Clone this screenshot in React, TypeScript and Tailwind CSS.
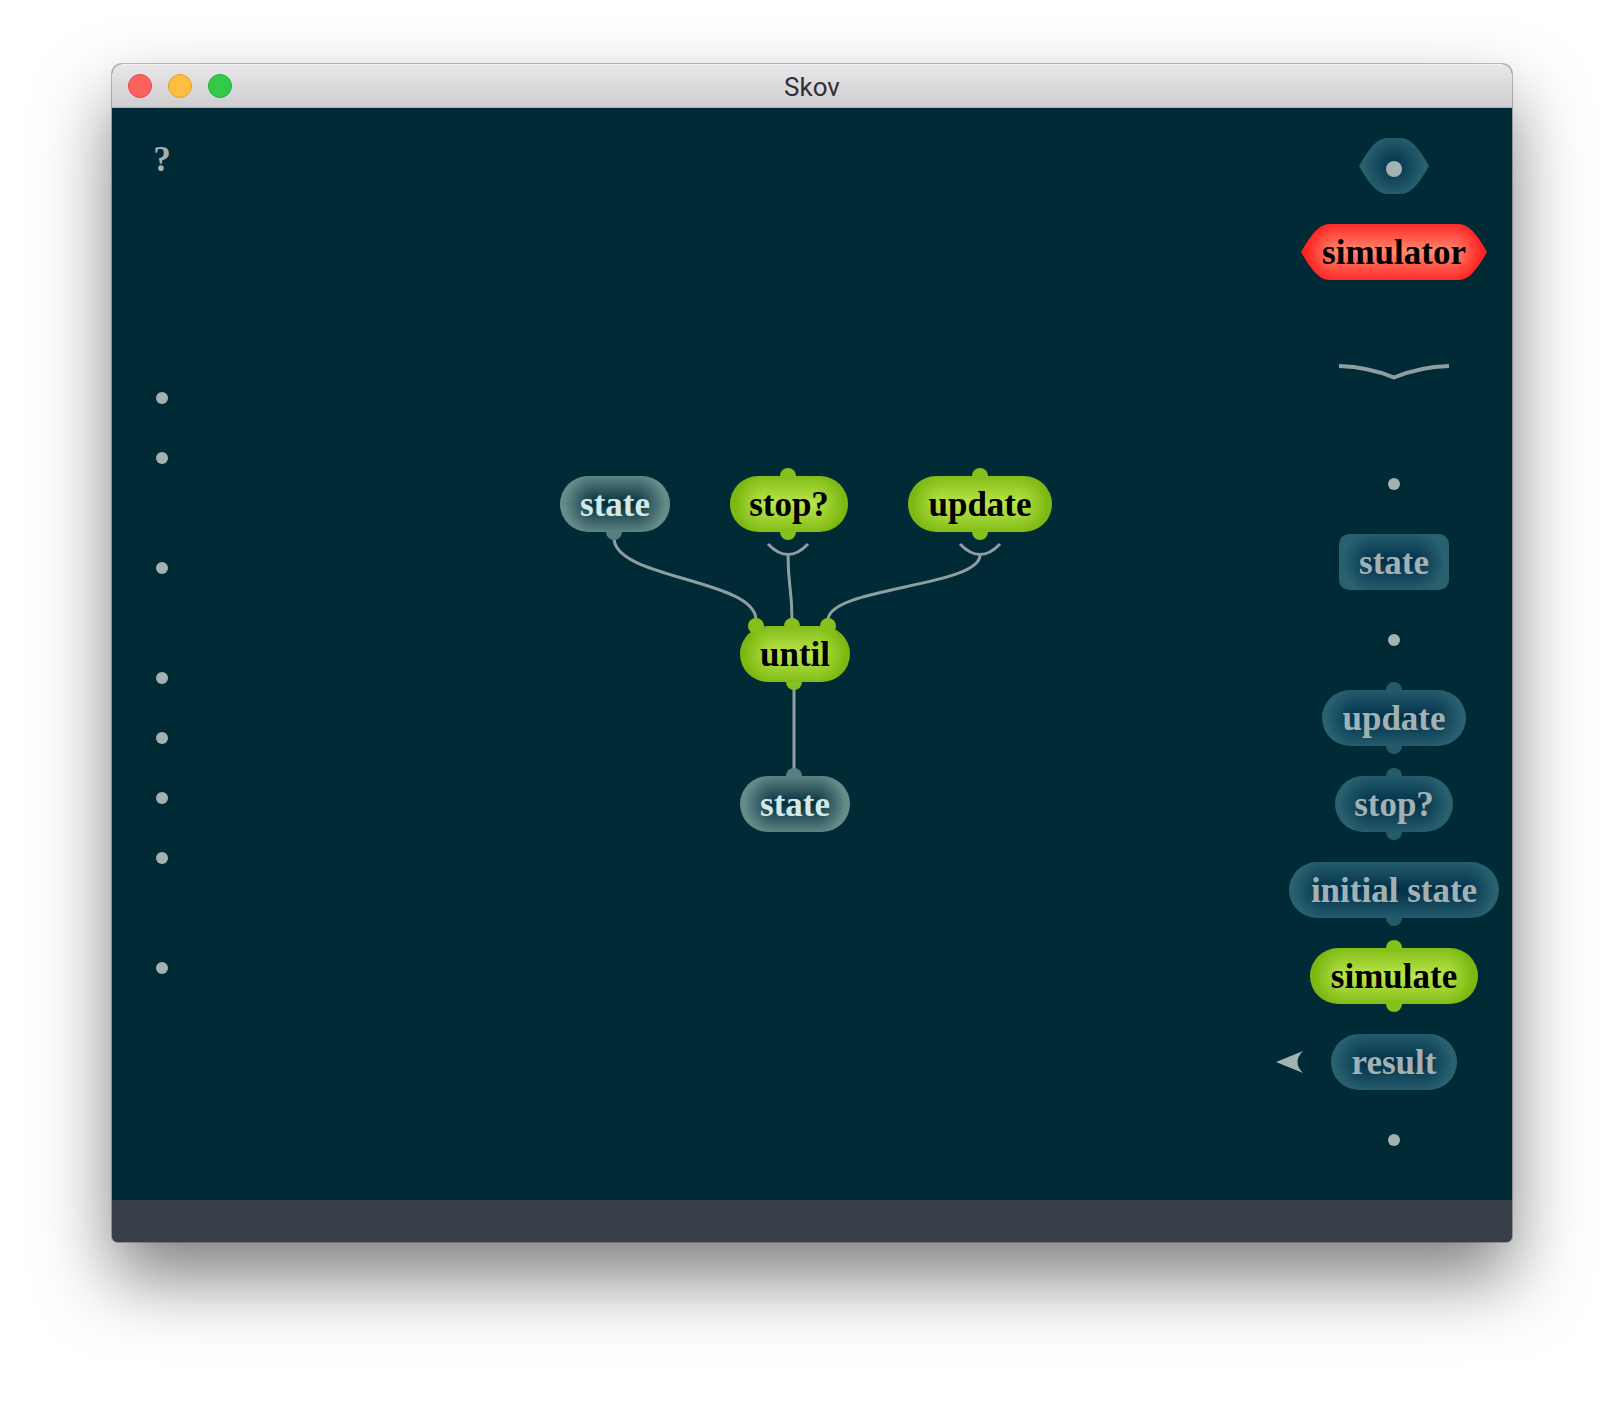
import React from "react";

type Tone = "blue" | "grey" | "green" | "red";

const TONES: Record<Tone, string> = {
  blue: "[--core:#00304a] [--rim:#29616f] text-[#a3b1b2]",
  grey: "[--core:#042f3d] [--rim:#668c8a] text-[#d3e8e8]",
  green: "[--core:#bae64c] [--rim:#7cb811] text-black",
  red: "[--core:#ff8a70] [--rim:#ff2020] text-black",
};

const GLOW =
  "[background:radial-gradient(circle_31px_at_100%_50%,var(--core),var(--rim))_0_0/35px_100%_no-repeat,radial-gradient(circle_31px_at_0_50%,var(--core),var(--rim))_100%_0/35px_100%_no-repeat,linear-gradient(var(--rim)_-3px,var(--core)_50%,var(--rim)_calc(100%+3px))_50%_0/calc(100%-68px)_100%_no-repeat]";

const PORTS: Record<Tone, string> = {
  blue: "bg-[#235b6a]",
  grey: "bg-[#587f80]",
  green: "bg-[#86c01c]",
  red: "bg-[#ff3030]",
};

type NodeProps = {
  label: React.ReactNode;
  tone: Tone;
  width: string;
  shape?: string;
  ports?: string[];
  raisedPorts?: string[];
  place?: string;
};

function Node({ label, tone, width, shape = "rounded-full", ports = [], raisedPorts = [], place = "relative" }: NodeProps) {
  return (
    <button type="button" className={`block h-14 ${width} ${place} ${TONES[tone]}`}>
      {ports.map((p) => (
        <span key={p} className={`absolute size-4 rounded-full ${PORTS[tone]} ${p}`} />
      ))}
      <span className={`relative flex size-full items-center justify-center pt-0.5 text-[35px] leading-10 font-bold whitespace-nowrap ${GLOW} ${shape}`}>
        {label}
      </span>
      {raisedPorts.map((p) => (
        <span key={p} className={`absolute size-4 rounded-full ${PORTS[tone]} ${p}`} />
      ))}
    </button>
  );
}

function Dot({ space = "" }: { space?: string }) {
  return <button type="button" aria-label="Insert" className={`block size-3 rounded-full bg-[#a3b1b2] ${space}`} />;
}

const TOP = "-top-2 left-1/2 -translate-x-1/2";
const BOTTOM = "-bottom-2 left-1/2 -translate-x-1/2";

function Graph() {
  return (
    <div className="relative h-[356px] w-[492px]">
      <svg className="absolute inset-0 size-full overflow-visible" viewBox="0 0 492 356" fill="none" stroke="#8f9fa1" strokeWidth="3">
        <path d="M54 62C54 103 196 103 196 144" />
        <path d="M228 79C228 111 232 111 232 144" />
        <path d="M420 79C420 111 268 111 268 144" />
        <path d="M208 68Q228 89 248 68" />
        <path d="M400 68Q420 89 440 68" />
        <path d="M234 212V294" />
      </svg>
      <Node label="state" tone="grey" width="w-[110px]" place="absolute top-0 left-0" ports={["-bottom-2 left-[46px]"]} />
      <Node label="stop?" tone="green" width="w-[118px]" place="absolute top-0 left-[170px]" ports={["-top-2 left-[50px]", "-bottom-2 left-[50px]"]} />
      <Node label="update" tone="green" width="w-[144px]" place="absolute top-0 left-[348px]" ports={[TOP, BOTTOM]} />
      <Node
        label="until"
        tone="green"
        width="w-[110px]"
        place="absolute top-[150px] left-[180px]"
        ports={["-top-2 left-11", "-bottom-2 left-[46px]"]}
        raisedPorts={["-top-2 left-2", "-top-2 left-20"]}
      />
      <Node label="state" tone="grey" width="w-[110px]" place="absolute top-[300px] left-[180px]" ports={["-top-2 left-[46px]"]} />
    </div>
  );
}

export default function App() {
  return (
    <div className="min-h-screen bg-white px-28 pt-16 pb-40 font-['Liberation_Serif',serif]">
      <div className="overflow-hidden rounded-t-[10px] rounded-b-[6px] bg-[#002b36] shadow-[0_0_0_1px_rgba(0,0,0,0.25),0_36px_72px_rgba(0,0,0,0.5)]">
        <header className="grid h-11 grid-cols-3 items-center border-t border-b border-t-[#f4f3f4] border-b-[#b5b3b5] bg-linear-to-b from-[#e8e6e9] to-[#d1ced2] px-4">
          <div className="flex gap-4">
            <button type="button" aria-label="Close" className="size-6 rounded-full border border-[#e2464a] bg-[#fd615c]" />
            <button type="button" aria-label="Minimize" className="size-6 rounded-full border border-[#dfa023] bg-[#fdbe41]" />
            <button type="button" aria-label="Zoom" className="size-6 rounded-full border border-[#1fad30] bg-[#34ca49]" />
          </div>
          <h1 className="pt-0.5 text-center font-['Roboto',sans-serif] text-[26px] leading-8 text-[#323034]">Skov</h1>
        </header>

        <div className="flex">
          <nav className="mr-[124px] flex w-[100px] flex-col items-center gap-12 pt-8">
            <button type="button" className="mb-40 block h-9 w-9 text-[35px] leading-10 font-bold text-[#a3b1b2]">?</button>
            <Dot space="mt-2" />
            <Dot />
            <Dot space="mt-[50px]" />
            <Dot space="mt-[50px]" />
            <Dot />
            <Dot />
            <Dot />
            <Dot space="mt-[50px]" />
          </nav>

          <main className="flex flex-1 items-center justify-center">
            <Graph />
          </main>

          <aside className="flex w-[236px] flex-col items-center gap-[30px] pt-[30px] pb-10">
            <Node
              label={<span className="mt-1 size-4 rounded-full bg-[#a3b1b2]" />}
              tone="blue"
              width="w-[70px]"
              shape="[clip-path:path('M0_28C8_14_17_0_28_0H42C53_0_62_14_70_28C62_42_53_56_42_56H28C17_56_8_42_0_28Z')]"
            />
            <Node
              label="simulator"
              tone="red"
              width="w-[186px]"
              shape="[clip-path:path('M0_28C8_14_17_0_28_0H158C169_0_178_14_186_28C178_42_169_56_158_56H28C17_56_8_42_0_28Z')]"
            />
            <svg className="my-[54px] h-4 w-[110px]" viewBox="0 0 110 16" fill="none" stroke="#8f9fa1" strokeWidth="4">
              <path d="M0 2Q30 3 55 13.500Q80 3 110 2" />
            </svg>
            <Dot space="my-[14px]" />
            <Node label="state" tone="blue" width="w-[110px]" shape="rounded-[10px]" />
            <Dot space="my-[14px]" />
            <Node label="update" tone="blue" width="w-[144px]" ports={[TOP, BOTTOM]} />
            <Node label="stop?" tone="blue" width="w-[118px]" ports={[TOP, BOTTOM]} />
            <Node label="initial state" tone="blue" width="w-[210px]" ports={[BOTTOM]} />
            <Node label="simulate" tone="green" width="w-[168px]" ports={[TOP, BOTTOM]} />
            <div className="relative">
              <svg className="absolute top-[17px] right-full mr-7 h-[22px] w-[27px]" viewBox="0 0 27 22" fill="#a3b1b2">
                <path d="M0 11L27 0Q16 11 27 22Z" />
              </svg>
              <Node label="result" tone="blue" width="w-[126px]" />
            </div>
            <Dot space="my-[14px]" />
          </aside>
        </div>

        <footer className="h-[42px] bg-[#393f49]" />
      </div>
    </div>
  );
}
